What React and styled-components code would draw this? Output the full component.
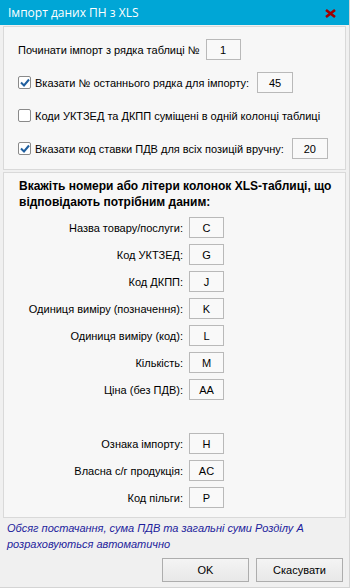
import React from "react";
import styled, { createGlobalStyle } from "styled-components";

const GlobalStyle = createGlobalStyle`
  html, body {
    margin: 0;
    padding: 0;
    background: #f0f0f0;
  }
  * {
    box-sizing: border-box;
  }
`;

const Window = styled.div`
  display: flex;
  flex-direction: column;
  width: 350px;
  height: 588px;
  background: #f0f0f0;
  font-family: "Liberation Sans", Arial, sans-serif;
  font-size: 11px;
  color: #000;
  border-right: 1px solid #d4d4d4;
  border-bottom: 1px solid #d4d4d4;
`;

const TitleBar = styled.div`
  display: flex;
  align-items: center;
  justify-content: space-between;
  height: 25px;
  padding: 0 13px 0 8px;
  background: #00a6d6;
  color: #fff;
  font-family: "Open Sans", "Liberation Sans", sans-serif;
  font-size: 12px;
`;

const CloseIcon = styled.svg`
  width: 11px;
  height: 9px;
  margin-top: 2px;
`;

const Body = styled.div`
  display: flex;
  flex-direction: column;
  flex: 1;
  padding: 1px 3px 0 3px;
`;

const Panel = styled.div`
  display: flex;
  flex-direction: column;
  background: #f7f7f7;
  border: 1px solid #d9d9d9;
  margin-bottom: 2px;
  gap: ${(p) => p.gap}px;
  padding: ${(p) => p.pad};
`;

const Row = styled.div`
  display: flex;
  align-items: center;
  height: 21px;
  gap: 6px;
  white-space: nowrap;
`;

const CheckRow = styled.label`
  display: flex;
  align-items: center;
  height: 21px;
  gap: 4px;
  white-space: nowrap;
`;

const Box = styled.div`
  display: flex;
  align-items: center;
  justify-content: center;
  flex-shrink: 0;
  width: ${(p) => p.w || 35}px;
  height: 21px;
  margin-left: ${(p) => p.ml || 0}px;
  background: #f9f9f9;
  border: 1px solid #b9b9b9;
  font-size: 11px;
`;

const CheckSquare = styled.span`
  display: flex;
  align-items: center;
  justify-content: center;
  width: 13px;
  height: 13px;
  background: #fff;
  border: 1px solid #8a8a8a;
  border-radius: 2px;
`;

const Heading = styled.div`
  font-weight: bold;
  font-size: 12px;
  line-height: 16px;
  padding-left: 11px;
  margin-bottom: 1px;
`;

const FieldRow = styled.div`
  display: grid;
  grid-template-columns: 175px 35px;
  column-gap: 6px;
  align-items: center;
  height: 21px;
`;

const FieldLabel = styled.span`
  text-align: right;
  white-space: nowrap;
`;

const Spacer = styled.div`
  height: 21px;
`;

const Note = styled.div`
  color: #1c1c9c;
  font-style: italic;
  font-size: 11px;
  line-height: 16px;
  padding: 0 4px;
`;

const Buttons = styled.div`
  display: flex;
  justify-content: flex-end;
  gap: 7px;
  margin-top: 6px;
  padding-right: 3px;
`;

const Button = styled.button`
  width: 87px;
  height: 24px;
  background: linear-gradient(#f4f4f4, #e8e8e8);
  border: 1px solid #adadad;
  font-family: "Liberation Sans", Arial, sans-serif;
  font-size: 11px;
  color: #000;
  padding: 0;
`;

function Check({ checked }) {
  return (
    <CheckSquare>
      {checked && (
        <svg width="10" height="9" viewBox="0 0 10 9">
          <path d="M1 4.5 L4 7.5 L9 1.5" fill="none" stroke="#1f5f9f" strokeWidth="2" />
        </svg>
      )}
    </CheckSquare>
  );
}

const fields = [
  ["Назва товару/послуги:", "C"],
  ["Код УКТЗЕД:", "G"],
  ["Код ДКПП:", "J"],
  ["Одиниця виміру (позначення):", "K"],
  ["Одиниця виміру (код):", "L"],
  ["Кількість:", "M"],
  ["Ціна (без ПДВ):", "AA"],
  null,
  ["Ознака імпорту:", "H"],
  ["Власна с/г продукція:", "AC"],
  ["Код пільги:", "P"],
];

export default function App() {
  return (
    <Window>
      <GlobalStyle />
      <TitleBar>
        <span>Імпорт даних ПН з XLS</span>
        <CloseIcon viewBox="0 0 11 9">
          <path d="M1 1 L10 8 M10 1 L1 8" stroke="#a00000" strokeWidth="2.6" />
        </CloseIcon>
      </TitleBar>
      <Body>
        <Panel gap={12} pad="12px 8px 10px 14px">
          <Row>
            <span>Починати імпорт з рядка таблиці №</span>
            <Box w={35}>1</Box>
          </Row>
          <CheckRow>
            <Check checked />
            <span>Вказати № останнього рядка для імпорту:</span>
            <Box w={36} ml={4}>45</Box>
          </CheckRow>
          <CheckRow>
            <Check />
            <span>Коди УКТЗЕД та ДКПП суміщені в одній колонці таблиці</span>
          </CheckRow>
          <CheckRow>
            <Check checked />
            <span>Вказати код ставки ПДВ для всіх позицій вручну:</span>
            <Box w={36} ml={4}>20</Box>
          </CheckRow>
        </Panel>
        <Panel gap={6} pad="5px 4px 9px 4px">
          <Heading>
            Вкажіть номери або літери колонок XLS-таблиці, що відповідають потрібним даним:
          </Heading>
          {fields.map((f, i) =>
            f ? (
              <FieldRow key={i}>
                <FieldLabel>{f[0]}</FieldLabel>
                <Box>{f[1]}</Box>
              </FieldRow>
            ) : (
              <Spacer key={i} />
            )
          )}
        </Panel>
        <Note>
          Обсяг постачання, сума ПДВ та загальні суми Розділу А розраховуються автоматично
        </Note>
        <Buttons>
          <Button>OK</Button>
          <Button>Скасувати</Button>
        </Buttons>
      </Body>
    </Window>
  );
}
